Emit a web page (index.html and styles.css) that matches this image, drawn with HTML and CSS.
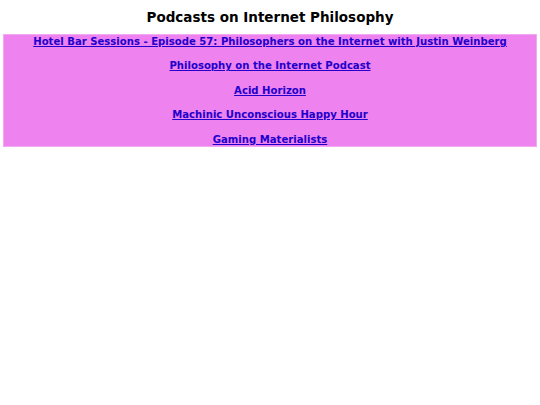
FILE: index.html
```html
<!DOCTYPE html>
<html>
<head>
<meta charset="utf-8">
<title>Podcasts on Internet Philosophy</title>
<link rel="stylesheet" href="styles.css">
</head>
<body>
<h1 class="title">Podcasts on Internet Philosophy</h1>
<div class="list">
  <p class="item"><a href="#">Hotel Bar Sessions - Episode 57: Philosophers on the Internet with Justin Weinberg</a></p>
  <p class="item"><a href="#">Philosophy on the Internet Podcast</a></p>
  <p class="item"><a href="#">Acid Horizon</a></p>
  <p class="item"><a href="#">Machinic Unconscious Happy Hour</a></p>
  <p class="item"><a href="#">Gaming Materialists</a></p>
</div>
</body>
</html>
```
FILE: styles.css
```css
html, body {
  margin: 0;
  padding: 0;
  background: #ffffff;
}
body {
  padding: 0 3px;
  font-family: "DejaVu Sans", Verdana, sans-serif;
}
.title {
  font-size: 13.5px;
  font-weight: bold;
  text-align: center;
  margin: 0;
  padding: 9px 0 9px;
  line-height: 16px;
  color: #000;
}
.list {
  background: #ee82ee;
  border: 1px solid #f2a8f2;
  text-align: center;
  padding: 1px 0 0;
}
.item {
  margin: 0 0 12.4px;
  font-size: 10.1px;
  font-weight: bold;
  line-height: 12px;
}
.item:last-child {
  margin-bottom: 0;
}
.item a {
  color: #2200cc;
}
```
